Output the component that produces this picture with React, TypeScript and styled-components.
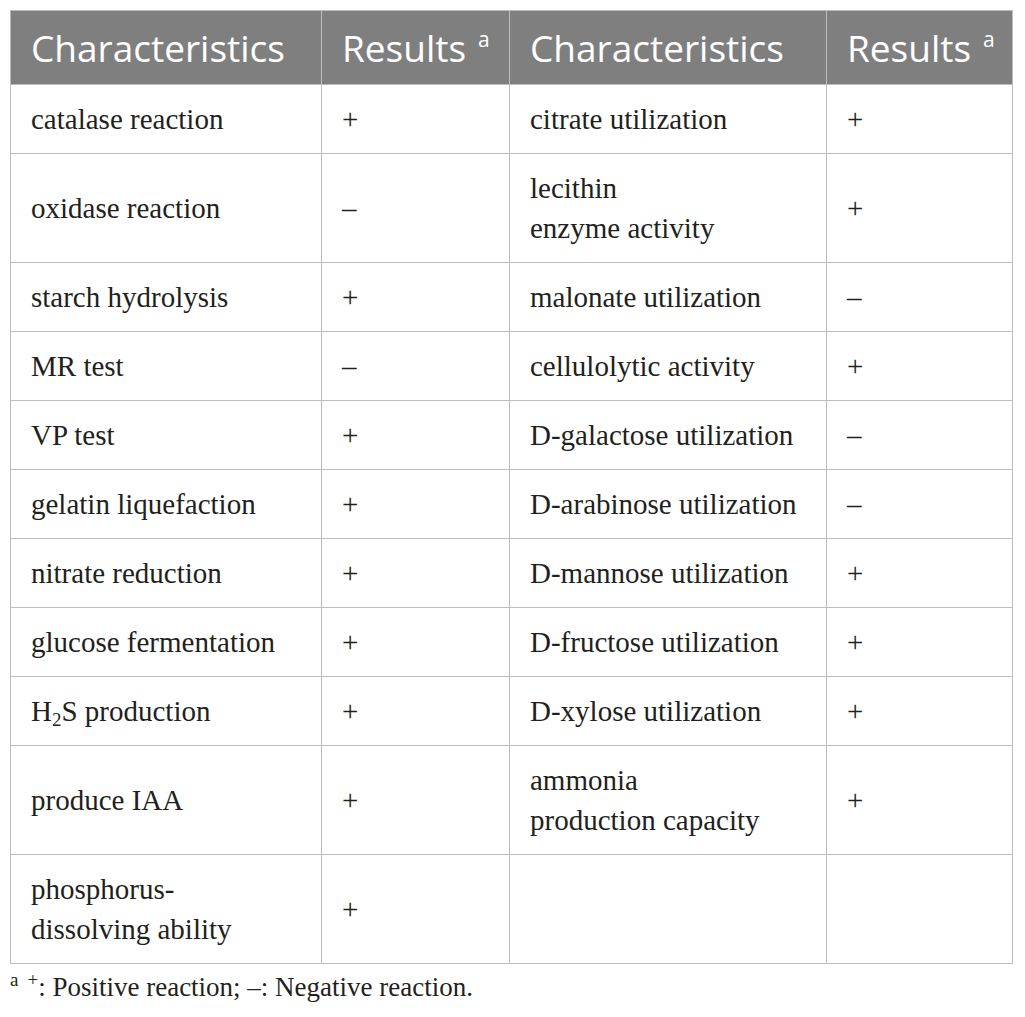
import React from "react";
import styled, { createGlobalStyle } from "styled-components";

const GlobalStyle = createGlobalStyle`
    html, body {
        margin: 0;
        padding: 0;
        background: #ffffff;
    }
`;

const Page = styled.div`
    padding: 10px 13px 0 10px;
    width: 1025px;
    box-sizing: border-box;
`;

const Table = styled.table`
    width: 1002px;
    border-collapse: collapse;
    table-layout: fixed;
    font-family: "Liberation Serif", "Times New Roman", serif;
    color: #231f20;
`;

const HeadCell = styled.th<{ $w: number }>`
    width: ${p => p.$w}px;
    height: 74px;
    box-sizing: border-box;
    background: #7f7f7f;
    color: #ffffff;
    border: 1px solid #bdbdbd;
    font-family: "Open Sans", "Noto Sans", sans-serif;
    font-weight: 400;
    font-size: 37px;
    text-align: left;
    padding: 0 20px;
    vertical-align: middle;
    white-space: nowrap;

    sup {
        font-size: 21px;
        vertical-align: 15px;
        line-height: 0;
        margin-left: 12px;
    }
`;

const Cell = styled.td`
    border: 1px solid #bdbdbd;
    font-size: 29px;
    line-height: 40px;
    padding: 14px 20px 14px 20px;
    vertical-align: middle;
    text-align: left;

    sub {
        font-size: 19px;
        vertical-align: -5px;
        line-height: 0;
    }
`;

const Note = styled.p`
    margin: 8px 0 0 0;
    font-family: "Liberation Serif", "Times New Roman", serif;
    font-size: 27px;
    color: #231f20;

    sup {
        font-size: 19px;
        vertical-align: 10px;
        line-height: 0;
    }

    .gap {
        margin-left: 9px;
    }
`;

type Row = [React.ReactNode, string, React.ReactNode, string];

const rows: Row[] = [
    ["catalase reaction", "+", "citrate utilization", "+"],
    ["oxidase reaction", "–", <>lecithin<br />enzyme activity</>, "+"],
    ["starch hydrolysis", "+", "malonate utilization", "–"],
    ["MR test", "–", "cellulolytic activity", "+"],
    ["VP test", "+", "D-galactose utilization", "–"],
    ["gelatin liquefaction", "+", "D-arabinose utilization", "–"],
    ["nitrate reduction", "+", "D-mannose utilization", "+"],
    ["glucose fermentation", "+", "D-fructose utilization", "+"],
    [<>H<sub>2</sub>S production</>, "+", "D-xylose utilization", "+"],
    ["produce IAA", "+", <>ammonia<br />production capacity</>, "+"],
    [<>phosphorus-<br />dissolving ability</>, "+", "", ""],
];

export default function App() {
    return (
        <Page>
            <GlobalStyle />
            <Table>
                <thead>
                    <tr>
                        <HeadCell $w={311}>Characteristics</HeadCell>
                        <HeadCell $w={188}>
                            Results<sup>a</sup>
                        </HeadCell>
                        <HeadCell $w={317}>Characteristics</HeadCell>
                        <HeadCell $w={186}>
                            Results<sup>a</sup>
                        </HeadCell>
                    </tr>
                </thead>
                <tbody>
                    {rows.map((r, i) => (
                        <tr key={"row-" + i}>
                            {r.map((c, j) => (
                                <Cell key={"cell-" + j}>{c}</Cell>
                            ))}
                        </tr>
                    ))}
                </tbody>
            </Table>
            <Note>
                <sup>a</sup>
                <sup className="gap">+</sup>: Positive reaction; –: Negative
                reaction.
            </Note>
        </Page>
    );
}
